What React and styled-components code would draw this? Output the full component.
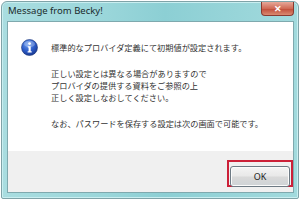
import React from "react";
import styled, { createGlobalStyle } from "styled-components";

const GlobalStyle = createGlobalStyle`
  html, body {
    margin: 0;
    padding: 0;
    background: #ffffff;
  }
`;

const Window = styled.div`
  box-sizing: border-box;
  margin: 1px;
  width: 298px;
  height: 198px;
  display: flex;
  flex-direction: column;
  border: 1px solid #7fa3a8;
  border-radius: 6px 6px 2px 2px;
  background: linear-gradient(
    90deg,
    #a9dde0 0%,
    #9ad6da 35%,
    #8ccfd4 55%,
    #a2dadd 100%
  );
  box-shadow: inset 0 0 0 1px #c9eef0;
  font-family: "Noto Sans", "Noto Sans CJK JP", sans-serif;
`;

const TitleBar = styled.div`
  height: 19px;
  display: flex;
  align-items: flex-start;
  justify-content: space-between;
  padding-left: 6px;
`;

const Title = styled.span`
  margin-top: 3px;
  font-size: 9.5px;
  line-height: 12px;
  color: #1a2a2c;
`;

const CloseButton = styled.div`
  width: 31px;
  height: 13px;
  margin-right: 4px;
  display: flex;
  align-items: center;
  justify-content: center;
  border: 1px solid #8a3a30;
  border-top: none;
  border-radius: 0 0 4px 4px;
  background: linear-gradient(180deg, #e6a89a 0%, #d06a55 50%, #c2503c 55%, #d98a70 100%);
  color: #fff;
  font-size: 9px;
  font-weight: bold;
  line-height: 1;
`;

const Client = styled.div`
  flex: 1;
  margin: 0 4px 5px 5px;
  display: flex;
  flex-direction: column;
  border: 1px solid #7fa9ae;
  background: #ffffff;
`;

const Content = styled.div`
  flex: 1;
  display: flex;
  gap: 13px;
  padding: 19px 0 0 13px;
`;

const IconWrap = styled.div`
  width: 17px;
  height: 17px;
  margin-top: -2px;
  flex-shrink: 0;
`;

const Message = styled.div`
  font-family: "Noto Sans CJK JP", sans-serif;
  font-size: 8.2px;
  line-height: 12px;
  color: #333333;
`;

const Para = styled.p`
  margin: 0;
  margin-top: ${(p) => (p.$first ? "0" : "14px")};
  white-space: nowrap;
`;

const Footer = styled.div`
  height: 41px;
  box-sizing: border-box;
  display: flex;
  justify-content: flex-end;
  align-items: flex-start;
  padding: 9px 0 0 0;
  background: #f0f0f0;
`;

const Highlight = styled.div`
  box-sizing: border-box;
  width: 66px;
  height: 27px;
  padding: 1px;
  border: 2px solid #cc2038;
`;

const OkButton = styled.button`
  box-sizing: border-box;
  width: 100%;
  height: 100%;
  border: 1px solid #6e7a84;
  border-radius: 3px;
  background: linear-gradient(180deg, #f4f4f4 0%, #e8e8e8 48%, #d9d9d9 52%, #cfd3d6 100%);
  box-shadow: inset 0 0 0 1px #fbfbfb;
  font-family: "Noto Sans", sans-serif;
  font-size: 9px;
  color: #222;
  padding: 0;
`;

const InfoIcon = () => (
  <svg width="17" height="17" viewBox="0 0 17 17">
    <defs>
      <radialGradient id="ig" cx="40%" cy="30%" r="70%">
        <stop offset="0%" stopColor="#6f9ef0" />
        <stop offset="60%" stopColor="#2c5cc8" />
        <stop offset="100%" stopColor="#1a3c96" />
      </radialGradient>
    </defs>
    <circle cx="8.5" cy="8.5" r="8" fill="url(#ig)" stroke="#1b3477" strokeWidth="0.6" />
    <ellipse cx="8.5" cy="5" rx="5.5" ry="3.2" fill="#ffffff" opacity="0.25" />
    <circle cx="8.6" cy="4.6" r="1.4" fill="#fff" />
    <path d="M6.8 7.2 H9.7 V12.2 H10.7 V13.4 H6.6 V12.2 H7.6 V8.4 H6.8 Z" fill="#fff" />
  </svg>
);

export default function App() {
  return (
    <>
      <GlobalStyle />
      <Window>
        <TitleBar>
          <Title>Message from Becky!</Title>
          <CloseButton>✕</CloseButton>
        </TitleBar>
        <Client>
          <Content>
            <IconWrap>
              <InfoIcon />
            </IconWrap>
            <Message>
              <Para $first>標準的なプロバイダ定義にて初期値が設定されます。</Para>
              <Para>
                正しい設定とは異なる場合がありますので
                <br />
                プロバイダの提供する資料をご参照の上
                <br />
                正しく設定しなおしてください。
              </Para>
              <Para>なお、パスワードを保存する設定は次の画面で可能です。</Para>
            </Message>
          </Content>
          <Footer>
            <Highlight>
              <OkButton>OK</OkButton>
            </Highlight>
          </Footer>
        </Client>
      </Window>
    </>
  );
}
